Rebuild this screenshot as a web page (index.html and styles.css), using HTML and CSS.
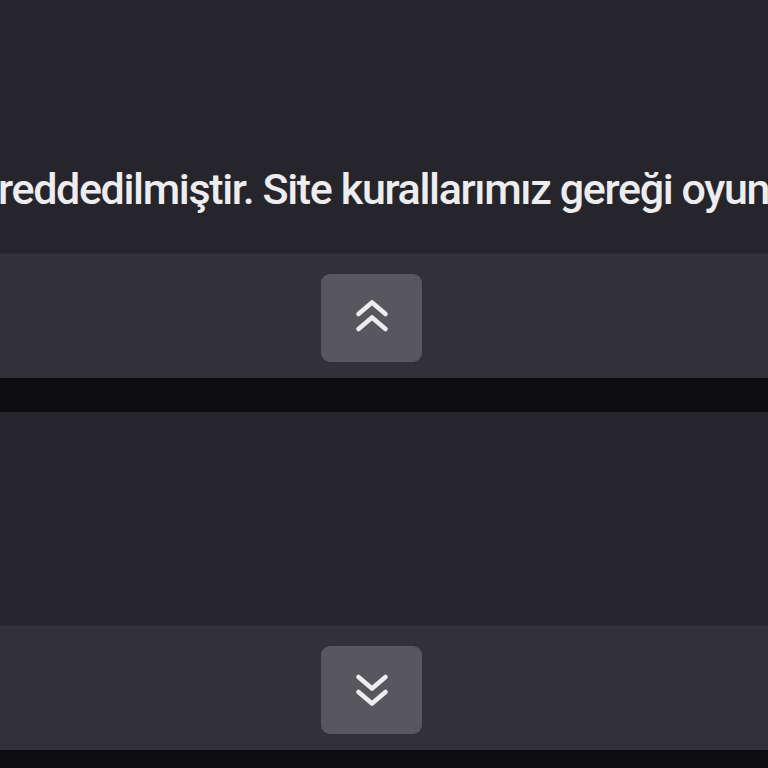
FILE: index.html
```html
<!DOCTYPE html>
<html>
<head>
<meta charset="utf-8">
<link rel="stylesheet" href="styles.css">
</head>
<body>
<div class="page">
  <section class="panel panel-top">
    <p class="msg">reddedilmiştir. Site kurallarımız gereği oyun</p>
  </section>
  <div class="bar">
    <button class="nav-btn" aria-label="Yukarı">
      <svg width="40" height="40" viewBox="0 0 40 40"><path d="M6.5 16 L20 4.5 L33.5 16 M6.5 31 L20 19.5 L33.5 31" fill="none" stroke="#ededef" stroke-width="4.6" stroke-linecap="round" stroke-linejoin="round"/></svg>
    </button>
  </div>
  <div class="gap"></div>
  <section class="panel panel-mid"></section>
  <div class="bar">
    <button class="nav-btn" aria-label="Aşağı">
      <svg width="40" height="40" viewBox="0 0 40 40"><path d="M6.5 7 L20 18.5 L33.5 7 M6.5 22 L20 33.5 L33.5 22" fill="none" stroke="#ededef" stroke-width="4.6" stroke-linecap="round" stroke-linejoin="round"/></svg>
    </button>
  </div>
  <div class="gap gap-end"></div>
</div>
</body>
</html>
```
FILE: styles.css
```css
html, body {
  margin: 0;
  padding: 0;
  background: #0d0c11;
}
.page {
  width: 768px;
  height: 768px;
  overflow: hidden;
  display: flex;
  flex-direction: column;
}
.panel {
  background: #26252b;
}
.panel-top {
  height: 253px;
  display: flex;
  align-items: flex-start;
  overflow: hidden;
}
.msg {
  margin: 159px 0 0 0;
  white-space: nowrap;
  font-family: Roboto, "Liberation Sans", sans-serif;
  font-size: 43px;
  font-weight: 500;
  letter-spacing: -1.35px;
  line-height: 60px;
  color: #ededef;
  text-indent: -2px;
}
.bar {
  height: 125px;
  background: #323137;
  border-top: 1px solid #2c2b31;
  box-sizing: border-box;
  display: flex;
  justify-content: center;
  padding-top: 20px;
  padding-right: 25px;
}
.nav-btn {
  width: 101px;
  height: 88px;
  border: none;
  border-radius: 9px;
  background: #58575d;
  display: flex;
  align-items: center;
  justify-content: center;
  padding: 0;
}
.gap {
  height: 34px;
  background: #0e0d12;
}
.panel-mid {
  height: 213px;
}
.gap-end {
  height: 18px;
}
```
